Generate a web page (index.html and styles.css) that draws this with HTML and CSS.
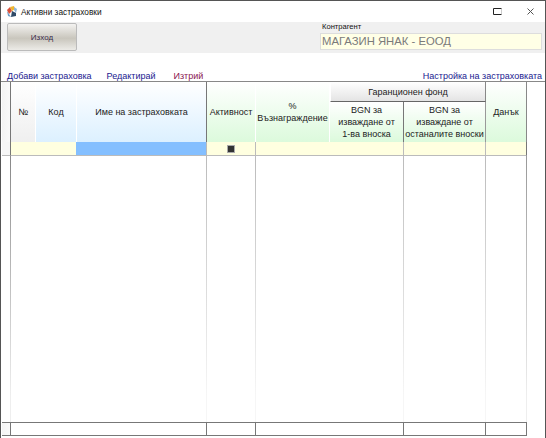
FILE: index.html
```html
<!DOCTYPE html>
<html lang="bg">
<head>
  <meta charset="UTF-8" />
  <title>Активни застраховки</title>
  <link rel="stylesheet" href="styles.css">
</head>
<body>
  <div class="window">
    <div class="titlebar">
      <svg class="app-icon" width="12" height="11" viewBox="0 0 12 11">
        <path d="M1 4 L4 1 L6 5 L3 8 Z" fill="#d8503a"/>
        <path d="M4 1 L8 0 L9 3 L6 5 Z" fill="#efb52f"/>
        <path d="M8 1 L11 3 L10 7 L8 4 Z" fill="#8fb7d8"/>
        <path d="M1 5 L3 8 L5 11 L2 10 Z" fill="#6d9cc4"/>
        <path d="M6 5 L10 7 L10 10 L5 11 Z" fill="#2f4a68"/>
      </svg>
      <span class="title">Активни застраховки</span>
      <span class="win-buttons">
        <svg width="9" height="7" viewBox="0 0 9 7"><path d="M8.5 0.5 H0.5 V6.5 H8.5" fill="none" stroke="#222"/><path d="M8.5 1 V6" stroke="#ccc"/></svg>
        <svg width="7" height="7" viewBox="0 0 7 7"><path d="M0.5 0.5 L6.5 6.5 M6.5 0.5 L0.5 6.5" stroke="#555" fill="none"/></svg>
      </span>
    </div>

    <div class="toolbar">
      <button class="exit-btn">Изход</button>
      <div class="client">
        <label>Контрагент</label>
        <div class="client-name">МАГАЗИН ЯНАК - ЕООД</div>
      </div>
    </div>

    <nav class="links">
      <a class="blue" href="#">Добави застраховка</a>
      <a class="blue" href="#">Редактирай</a>
      <a class="purple" href="#">Изтрий</a>
      <a class="blue right" href="#">Настройка на застраховката</a>
    </nav>

    <div class="grid-wrap">
      <table class="grid">
        <colgroup>
          <col class="c-row"><col class="c-no"><col class="c-code"><col class="c-name"><col class="c-active">
          <col class="c-pct"><col class="c-bgn1"><col class="c-bgn2"><col class="c-tax">
        </colgroup>
        <thead>
          <tr class="head-top">
            <th class="corner" rowspan="2"></th>
            <th class="gray" rowspan="2">№</th>
            <th class="sky" rowspan="2">Код</th>
            <th class="sky name-head" rowspan="2">Име на застраховката</th>
            <th class="mint" rowspan="2">Активност</th>
            <th class="mint" rowspan="2">%<br>Възнаграждение</th>
            <th class="band" colspan="2">Гаранционен фонд</th>
            <th class="mint tax-head" rowspan="2">Данък</th>
          </tr>
          <tr class="head-sub">
            <th class="mint">BGN за<br>изваждане от<br>1-ва вноска</th>
            <th class="mint">BGN за<br>изваждане от<br>останалите вноски</th>
          </tr>
        </thead>
        <tbody>
          <tr class="filter">
            <td class="corner"></td>
            <td></td>
            <td></td>
            <td class="current"></td>
            <td><span class="check"></span></td>
            <td></td>
            <td></td>
            <td></td>
            <td></td>
          </tr>
          <tr class="rows">
            <td></td><td></td><td></td><td></td><td></td><td></td><td></td><td></td><td></td>
          </tr>
        </tbody>
        <tfoot>
          <tr class="totals">
            <td class="corner"></td><td colspan="3"></td><td></td><td colspan="2"></td><td></td><td></td>
          </tr>
        </tfoot>
      </table>
    </div>
  </div>
</body>
</html>
```

FILE: styles.css
```css
* {
  box-sizing: border-box;
}

html, body {
  margin: 0;
  height: 100%;
  overflow: hidden;
}

body {
  font-family: 'Liberation Sans', Arial, sans-serif;
  font-size: 9px;
  color: #111;
  background: #fff;
}

.window {
  height: 438px;
  border: 1px solid #555;
  border-bottom: none;
  display: flex;
  flex-direction: column;
}

.titlebar {
  height: 21px;
  display: flex;
  align-items: center;
  padding: 0 11px 0 5px;
  gap: 3px;
}

.title {
  color: #111;
  font-size: 8.3px;
}

.win-buttons {
  margin-left: auto;
  display: flex;
  gap: 25px;
}

.toolbar {
  height: 31px;
  background: #f0f0f0;
  display: flex;
  justify-content: space-between;
  padding-left: 6px;
}

.exit-btn {
  width: 70px;
  height: 28px;
  margin-top: 1px;
  border: 1px solid #bbb;
  border-radius: 2px;
  background: linear-gradient(#f4f3f1, #c9c6bd 55%, #ecebe7);
  font: 8px 'Liberation Sans', Arial, sans-serif;
  color: #3a2a4a;
}

.client {
  width: 222px;
  margin-right: 3px;
}

.client label {
  display: block;
  height: 11px;
  padding-left: 2px;
  font-size: 7.6px;
  line-height: 10px;
}

.client-name {
  height: 17px;
  background: #ffffe6;
  border: 1px solid #ddd;
  padding-left: 1px;
  color: #7a7a7a;
  font-size: 11.3px;
  line-height: 15px;
}

.links {
  height: 29px;
  display: flex;
  align-items: flex-end;
  gap: 15px;
  padding: 0 3px 0 6px;
  border-bottom: 1px solid #888;
}

.links a {
  text-decoration: none;
  line-height: 10px;
}

.blue {
  color: #1a1a90;
}

.purple {
  color: #8a1550;
  margin-left: 3px;
}

.right {
  margin-left: auto;
}

.grid-wrap {
  padding-left: 1px;
}

.grid {
  width: 525px;
  height: 354px;
  table-layout: fixed;
  border-collapse: separate;
  border-spacing: 0;
}

.c-row { width: 9px; }
.c-no { width: 24px; }
.c-code { width: 41px; }
.c-name { width: 131px; }
.c-active { width: 49px; }
.c-pct { width: 74px; }
.c-bgn1 { width: 74px; }
.c-bgn2 { width: 82px; }
.c-tax { width: 41px; }

.grid th {
  padding: 0;
  font-weight: normal;
  font-size: 9px;
  line-height: 12px;
  text-align: center;
  vertical-align: middle;
  color: #222;
}

.grid td {
  padding: 0;
}

.head-top {
  height: 20px;
}

.head-sub {
  height: 40px;
}

.corner {
  background: linear-gradient(90deg, #f4f4f4, #fafafa);
  border-right: 1px solid #777;
}

.gray {
  background: linear-gradient(#fff, #efefef);
}

.sky {
  background: linear-gradient(#fff, #dcf0ff);
  border-left: 1px solid #fff;
}

.name-head {
  border-right: 1px solid #777;
}

.mint {
  background: linear-gradient(#fff, #dcfadc);
  border-right: 1px solid #fff;
}

.band {
  background: linear-gradient(#fff, #e4e4e4);
  border-bottom: 1px solid #666;
  border-left: 1px solid #fff;
  border-right: 1px solid #888;
}

.head-sub .mint:first-child {
  border-right: 1px solid #777;
}

.head-sub .mint:last-child {
  border-right: 1px solid #999;
}

.grid .tax-head {
  border-right: 1px solid #888;
}

.filter {
  height: 14px;
}

.filter td {
  background: #ffffe0;
  border-bottom: 1px solid #bbb;
  text-align: center;
  line-height: 0;
}

.filter .corner {
  background: #f6f6f6;
}

.filter .current {
  background: #84bfff;
  border-right: 1px solid #bbb;
}

.filter td:nth-child(5),
.filter td:nth-child(7),
.filter td:nth-child(8) {
  border-right: 1px solid #bbb;
}

.filter td:last-child {
  border-right: 1px solid #777;
}

.check {
  display: inline-block;
  width: 8px;
  height: 8px;
  background: #333;
  border: 1px solid #aaa;
}

.rows td {
  background: linear-gradient(#bbb, #f6f6f6 90%) right / 1px 100% no-repeat;
}

.rows td:nth-child(1) {
  background-image: linear-gradient(#888, #eee 90%);
}

.rows td:nth-child(2),
.rows td:nth-child(3),
.rows td:nth-child(6) {
  background: none;
}

.rows td:last-child {
  background-image: linear-gradient(#999, #eee 90%);
}

.totals {
  height: 14px;
}

.totals td {
  border-top: 1px solid #777;
  border-bottom: 1px solid #777;
  border-right: 1px solid #777;
}

.totals .corner {
  border-top: 1px solid #777;
}
```
